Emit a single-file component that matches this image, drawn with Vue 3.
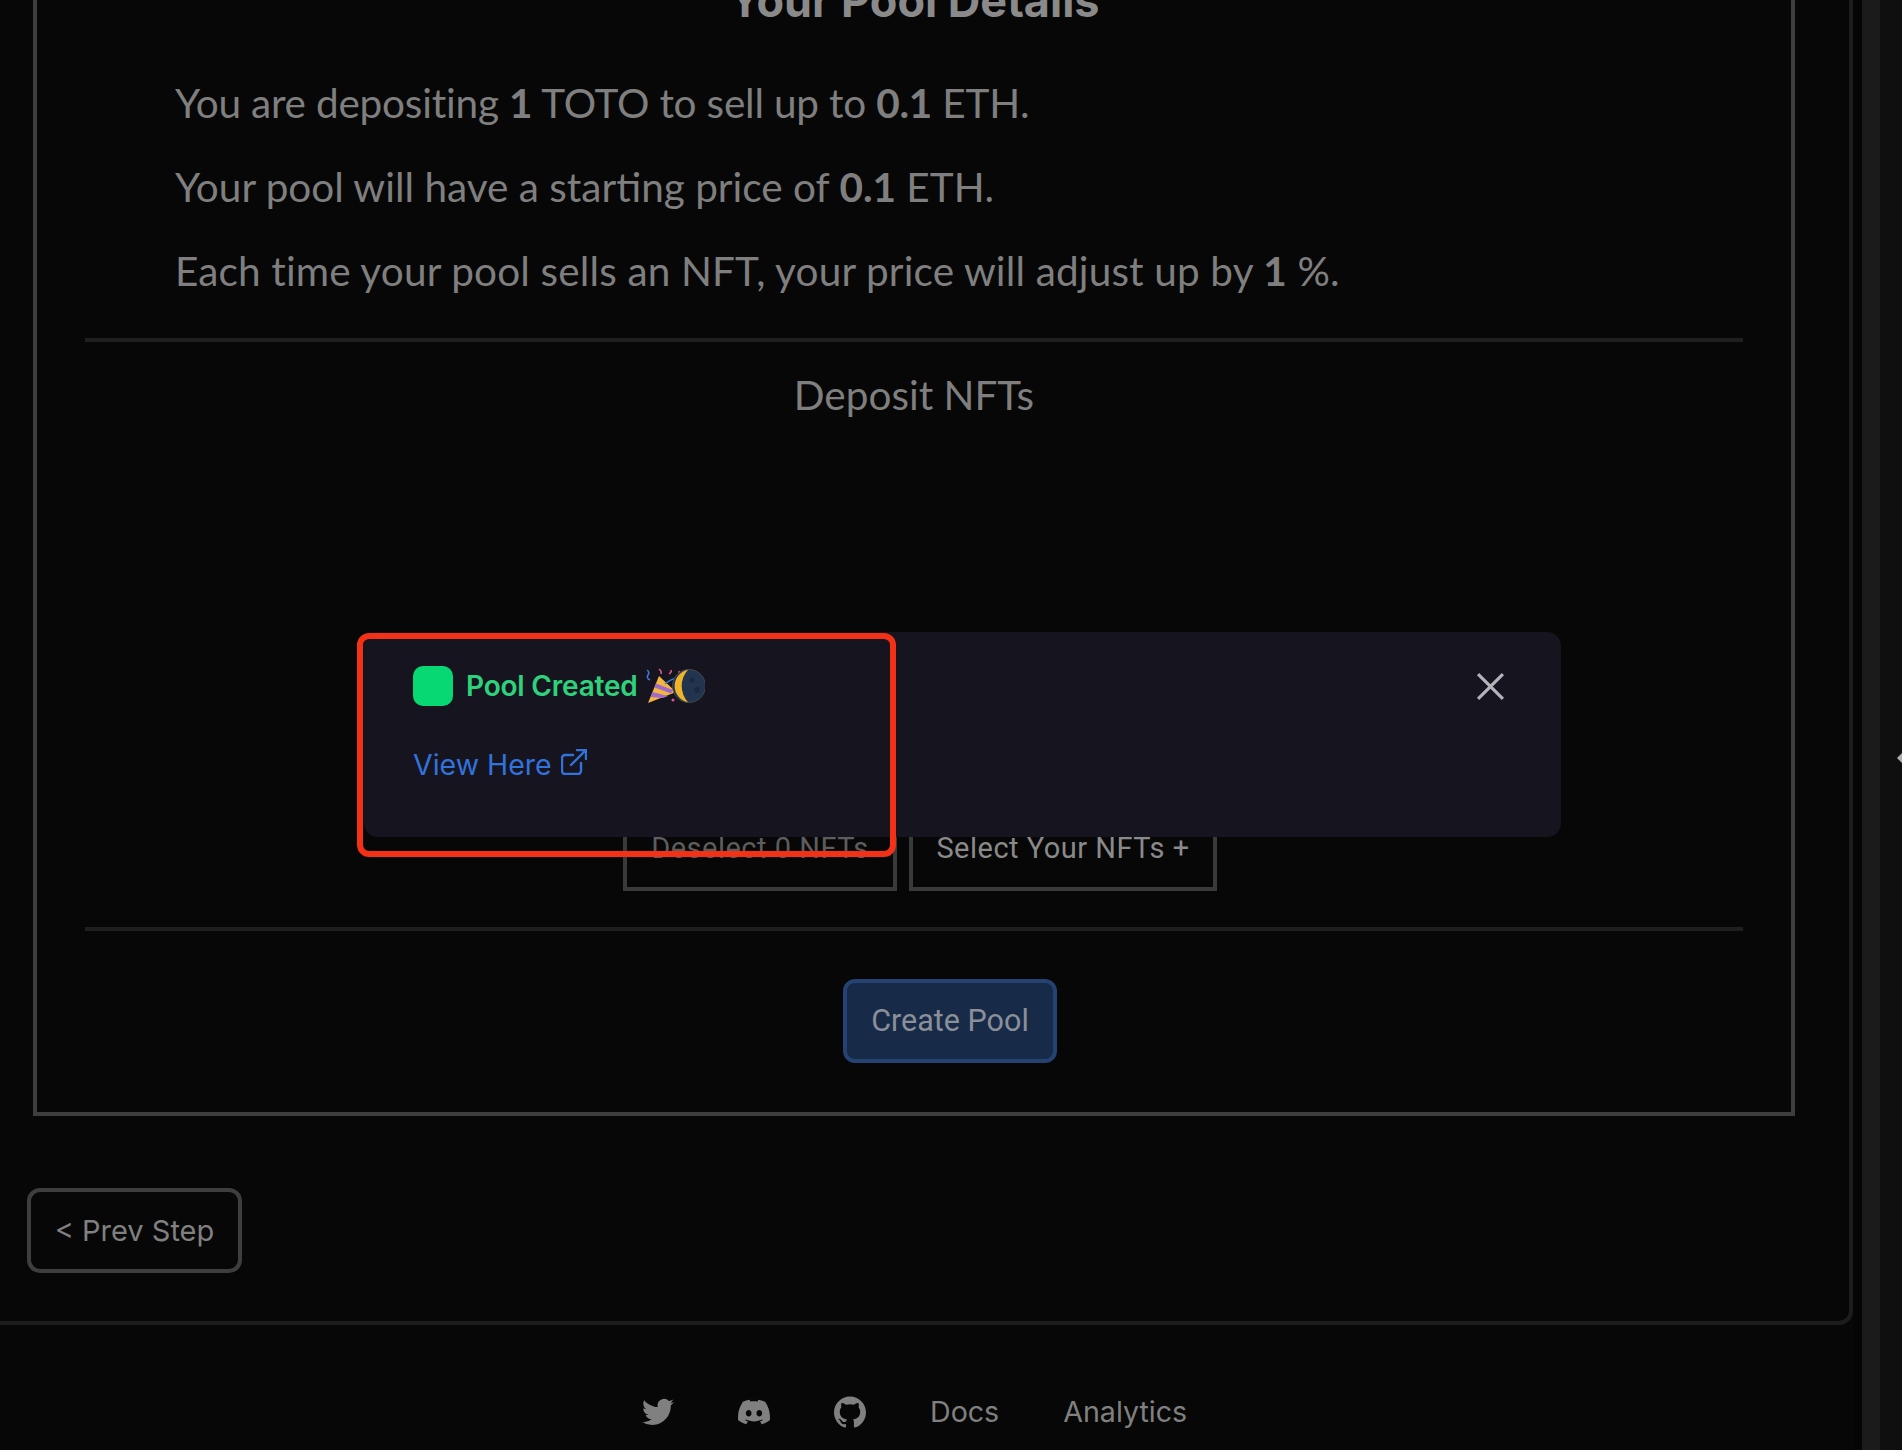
<script setup>
const lines = [
  ['You are depositing ', '1', ' TOTO to sell up to ', '0.1', ' ETH.'],
  ['Your pool will have a starting price of ', '0.1', ' ETH.'],
  ['Each time your pool sells an NFT, your price will adjust up by ', '1', ' %.'],
]
</script>

<template>
  <div class="page">
    <div class="column">
      <main class="shell">
        <section class="panel">
          <h2 class="title">Your Pool Details</h2>
          <p v-for="(parts, i) in lines" :key="i" class="line">
            <template v-for="(part, j) in parts" :key="j"><b v-if="j % 2">{{ part }}</b><template v-else>{{ part }}</template></template>
          </p>
          <hr class="rule rule-top" />
          <h3 class="deposit">Deposit NFTs</h3>
          <div class="select-row">
            <button class="square-btn deselect">Deselect 0 NFTs</button>
            <button class="square-btn select">Select Your NFTs +</button>
          </div>
          <hr class="rule rule-bottom" />
          <div class="create-row"><button class="create">Create Pool</button></div>
        </section>
        <button class="prev">&lt; Prev Step</button>
      </main>
      <footer class="footer">
        <svg class="social" viewBox="0 0 24 24" fill="currentColor"><path d="M23.953 4.57a10 10 0 01-2.825.775 4.958 4.958 0 002.163-2.723c-.951.555-2.005.959-3.127 1.184a4.92 4.92 0 00-8.384 4.482C7.69 8.095 4.067 6.13 1.64 3.162a4.822 4.822 0 00-.666 2.475c0 1.71.87 3.213 2.188 4.096a4.904 4.904 0 01-2.228-.616v.06a4.923 4.923 0 003.946 4.827 4.996 4.996 0 01-2.212.085 4.936 4.936 0 004.604 3.417 9.867 9.867 0 01-6.102 2.105c-.39 0-.779-.023-1.17-.067a13.995 13.995 0 007.557 2.209c9.053 0 13.998-7.496 13.998-13.985 0-.21 0-.42-.015-.63A9.935 9.935 0 0024 4.59z"/></svg>
        <svg class="social" viewBox="0 0 24 24" fill="currentColor"><path d="M20.317 4.3698a19.7913 19.7913 0 00-4.8851-1.5152.0741.0741 0 00-.0785.0371c-.211.3753-.4447.8648-.6083 1.2495-1.8447-.2762-3.68-.2762-5.4868 0-.1636-.3933-.4058-.8742-.6177-1.2495a.077.077 0 00-.0785-.037 19.7363 19.7363 0 00-4.8852 1.515.0699.0699 0 00-.0321.0277C.5334 9.0458-.319 13.5799.0992 18.0578a.0824.0824 0 00.0312.0561c2.0528 1.5076 4.0413 2.4228 5.9929 3.0294a.0777.0777 0 00.0842-.0276c.4616-.6304.8731-1.2952 1.226-1.9942a.076.076 0 00-.0416-.1057c-.6528-.2476-1.2743-.5495-1.8722-.8923a.077.077 0 01-.0076-.1277c.1258-.0943.2517-.1923.3718-.2914a.0743.0743 0 01.0776-.0105c3.9278 1.7933 8.18 1.7933 12.0614 0a.0739.0739 0 01.0785.0095c.1202.099.246.1981.3728.2924a.077.077 0 01-.0066.1276 12.2986 12.2986 0 01-1.873.8914.0766.0766 0 00-.0407.1067c.3604.698.7719 1.3628 1.225 1.9932a.076.076 0 00.0842.0286c1.961-.6067 3.9495-1.5219 6.0023-3.0294a.077.077 0 00.0313-.0552c.5004-5.177-.8382-9.6739-3.5485-13.6604a.061.061 0 00-.0312-.0286zM8.02 15.3312c-1.1825 0-2.1569-1.0857-2.1569-2.419 0-1.3332.9555-2.4189 2.157-2.4189 1.2108 0 2.1757 1.0952 2.1568 2.419 0 1.3332-.9555 2.4189-2.1569 2.4189zm7.9748 0c-1.1825 0-2.1569-1.0857-2.1569-2.419 0-1.3332.9554-2.4189 2.1569-2.4189 1.2108 0 2.1757 1.0952 2.1568 2.419 0 1.3332-.946 2.4189-2.1568 2.4189Z"/></svg>
        <svg class="social" viewBox="0 0 24 24" fill="currentColor"><path d="M12 .297c-6.63 0-12 5.373-12 12 0 5.303 3.438 9.8 8.205 11.385.6.113.82-.258.82-.577 0-.285-.01-1.04-.015-2.04-3.338.724-4.042-1.61-4.042-1.61C4.422 18.07 3.633 17.7 3.633 17.7c-1.087-.744.084-.729.084-.729 1.205.084 1.838 1.236 1.838 1.236 1.07 1.835 2.809 1.305 3.495.998.108-.776.417-1.305.76-1.605-2.665-.3-5.466-1.332-5.466-5.93 0-1.31.465-2.38 1.235-3.22-.135-.303-.54-1.523.105-3.176 0 0 1.005-.322 3.3 1.23.96-.267 1.98-.399 3-.405 1.02.006 2.04.138 3 .405 2.28-1.552 3.285-1.23 3.285-1.23.645 1.653.24 2.873.12 3.176.765.84 1.23 1.91 1.23 3.22 0 4.61-2.805 5.625-5.475 5.92.42.36.81 1.096.81 2.22 0 1.606-.015 2.896-.015 3.286 0 .315.21.69.825.57C20.565 22.092 24 17.592 24 12.297c0-6.627-5.373-12-12-12"/></svg>
        <a class="foot-link">Docs</a>
        <a class="foot-link">Analytics</a>
      </footer>
    </div>
    <div class="gutter"></div>
    <div class="track"></div>
    <div class="side"></div>
    <span class="handle"></span>

    <div class="toast">
      <div class="toast-head">
        <span class="dot"></span>
        <span class="toast-title">Pool Created</span>
        <svg class="party" viewBox="0 0 60 36">
          <path d="M3 35 L14 8 L31 24 Z" fill="#f5b63d"/>
          <path d="M7.5 24 L23 28 L18 30 L5.5 29Z M11 15.5 L28 22 L26 25.500 L9.500 19.500Z" fill="#a06ac8"/>
          <g fill="none" stroke-width="1.500">
            <path d="M2 2q3 2 1 5t2 5" stroke="#3d7ae0"/>
            <path d="M14 1q3 2 2 5" stroke="#e0568a"/>
            <path d="M24 6q3-2 2-4m6 6q3-2 2-5" stroke="#e0568a"/>
            <path d="M20 16q8-7 16-5" stroke="#3d7ae0"/>
          </g>
          <circle cx="33" cy="25" r="1.500" fill="#f5b63d"/>
          <circle cx="28" cy="32" r="1.500" fill="#e0568a"/>
          <circle cx="36" cy="31" r="1.200" fill="#f5b63d"/>
          <circle cx="44" cy="18" r="16.500" fill="#23344f" stroke="#4a4f57" stroke-width="0.800"/>
          <path d="M43 1.800 A16.500 16.500 0 0 0 43 34.200 A24 24 0 0 1 43 1.800Z" fill="#f0b429"/>
          <circle cx="47" cy="12" r="2.500" fill="#1a2840"/>
          <circle cx="52" cy="22" r="3" fill="#1a2840"/>
        </svg>
        <svg class="close" viewBox="0 0 28 28" fill="none" stroke="currentColor" stroke-width="3"><path d="M2 2 L26 26 M26 2 L2 26"/></svg>
      </div>
      <a class="view">View Here
        <svg class="ext" viewBox="0 0 26 26" fill="none" stroke="currentColor" stroke-width="2.400" stroke-linecap="round" stroke-linejoin="round"><path d="M20 14v8a3 3 0 0 1-3 3H4a3 3 0 0 1-3-3V9a3 3 0 0 1 3-3h8"/><path d="M16 1h9v9M25 1 10 16"/></svg>
      </a>
    </div>
    <div class="highlight"></div>
  </div>
</template>

<style scoped>
.page {
  position: relative;
  display: flex;
  width: 1902px;
  height: 1450px;
  overflow: hidden;
  background: #070707;
  color: #808080;
  font-family: Inter, "Liberation Sans", sans-serif;
}
.column { width: 1853px; flex: none; margin-top: -77px; }
.shell {
  box-sizing: border-box;
  height: 1402px;
  padding-left: 27px;
  border-right: 4px solid #1d1d1d;
  border-bottom: 4px solid #1d1d1d;
  border-bottom-right-radius: 14px;
}
.panel {
  box-sizing: border-box;
  width: 1762px;
  margin-left: 6px;
  padding: 56px 48px 49px;
  border: 4px solid #3e3e3e;
  border-top-width: 0;
}
.title {
  margin: 0 0 58px;
  height: 44px;
  font-size: 45px;
  line-height: 44px;
  font-weight: 700;
  text-align: center;
  color: #8a8a8a;
}
.line {
  margin: 0 0 40px 90px;
  height: 44px;
  font-family: Lato, sans-serif;
  font-size: 40.5px;
  line-height: 43px;
  color: #7f7f7f;
}
.line:nth-of-type(1) { letter-spacing: -0.2px; }
.line:nth-of-type(3) { letter-spacing: 0.15px; }
.line b { font-weight: 700; }
.rule { margin: 0; height: 4px; border: 0; background: #1f1f1f; }
.rule-top { margin-top: 45px; }
.deposit {
  margin: 33px 0 0;
  height: 40px;
  font-family: Lato, sans-serif;
  font-size: 40.5px;
  line-height: 39px;
  font-weight: 400;
  text-align: center;
  color: #7f7f7f;
}
.select-row {
  display: flex;
  justify-content: center;
  gap: 12px;
  margin-top: 390px;
  padding-left: 12px;
}
.square-btn {
  box-sizing: border-box;
  height: 86px;
  padding-bottom: 2px;
  background: transparent;
  border: 4px solid #3a3a3a;
  font-family: Roboto, sans-serif;
  font-size: 29px;
  color: #8a8a8a;
  letter-spacing: 0.5px;
}
.deselect { width: 274px; color: #5d5d5d; }
.select { width: 308px; }
.rule-bottom { margin-top: 36px; }
.create-row { display: flex; justify-content: center; margin-top: 48px; padding-left: 72px; }
.create {
  box-sizing: border-box;
  width: 214px;
  height: 84px;
  padding-bottom: 3px;
  background: #172a47;
  border: 4px solid #244272;
  border-radius: 12px;
  font-family: Roboto, sans-serif;
  font-size: 30.5px;
  color: #8a8f98;
}
.prev {
  display: block;
  box-sizing: border-box;
  width: 215px;
  height: 85px;
  margin-top: 72px;
  padding-bottom: 2px;
  background: transparent;
  border: 4px solid #3e3e3e;
  border-radius: 13px;
  font-family: Inter, sans-serif;
  font-size: 29px;
  color: #808080;
}
.footer {
  display: flex;
  align-items: center;
  height: 174px;
  padding-left: 642px;
}
.social { width: 32px; height: 32px; margin-right: 64px; }
.foot-link { font-size: 28.6px; margin-right: 64px; line-height: 32px; }
.gutter { width: 9px; flex: none; background: #050505; }
.track { width: 18px; flex: none; background: #1b1b1b; }
.side { flex: 1; background: #0f0f0f; }
.handle {
  position: absolute;
  left: 1897px;
  top: 753px;
  border-top: 5px solid transparent;
  border-bottom: 5px solid transparent;
  border-right: 5px solid #b0b0b0;
}
.toast {
  position: absolute;
  left: 364px;
  top: 632px;
  box-sizing: border-box;
  width: 1197px;
  height: 205px;
  padding: 34px 56px 0 49px;
  background: #16151f;
  border-radius: 14px;
}
.toast-head { display: flex; align-items: center; height: 40px; }
.dot { width: 40px; height: 40px; border-radius: 10px; background: #07d873; }
.toast-title { margin-left: 13px; font-size: 28px; font-weight: 600; color: #2fd27c; letter-spacing: -0.2px; }
.party { width: 60px; height: 36px; margin-left: 7px; }
.close { width: 29px; height: 29px; margin-left: auto; color: #b4b4b8; }
.view {
  display: flex;
  align-items: center;
  gap: 9px;
  margin-top: 39px;
  font-size: 28.5px;
  line-height: 40px;
  color: #3272dc;
}
.ext { width: 26px; height: 26px; margin-top: -6px; }
.highlight {
  position: absolute;
  left: 357px;
  top: 633px;
  box-sizing: border-box;
  width: 539px;
  height: 224px;
  border: 6px solid #f33116;
  border-radius: 12px;
}
</style>

<style>
html, body { margin: 0; background: #070707; }
</style>
